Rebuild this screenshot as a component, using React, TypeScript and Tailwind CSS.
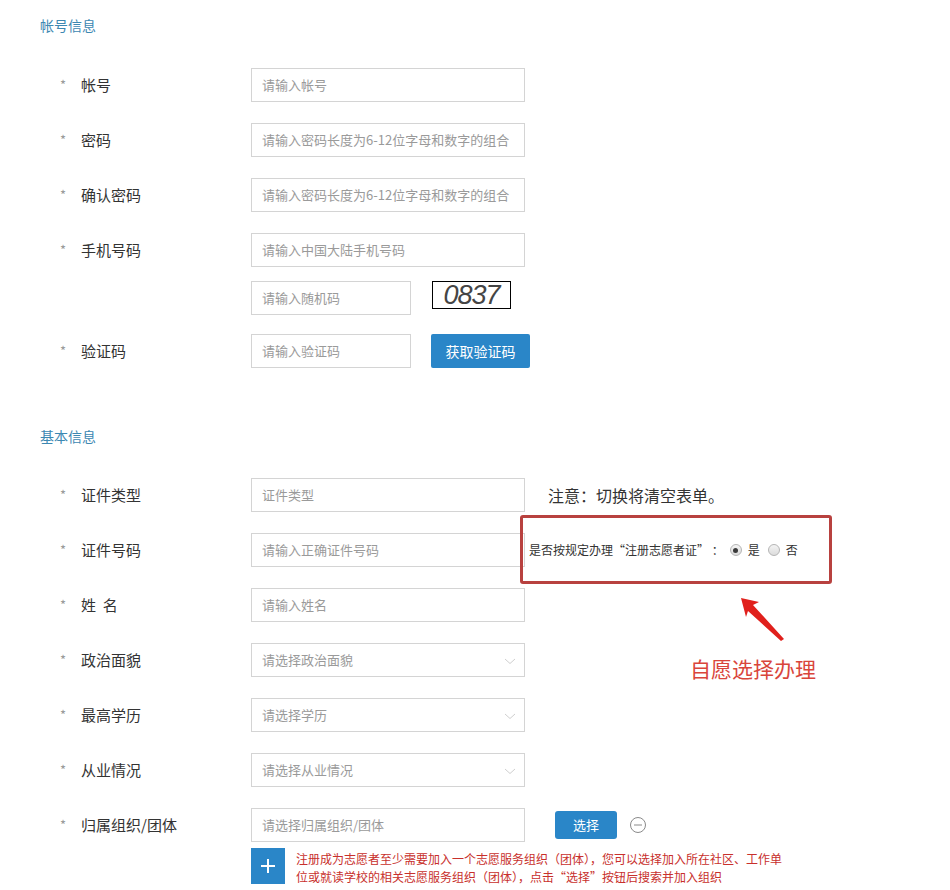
import type { ReactNode } from "react";

const font = "font-['Microsoft_YaHei','Noto_Sans_CJK_SC',sans-serif]";

function Chevron() {
    return (
        <svg width="12" height="7" viewBox="0 0 12 7" className="absolute right-[8px] top-[14px]">
            <path d="M1 1 L6 5.5 L11 1" fill="none" stroke="#cfcfcf" strokeWidth="1" />
        </svg>
    );
}

function Field({ placeholder, width = "w-[274px]", select = false }: { placeholder: string; width?: string; select?: boolean }) {
    return (
        <div className={`relative ${width} h-[34px] shrink-0 border border-[#d4d4d4] bg-white overflow-hidden`}>
            <div className="pl-[10px] pr-[6px] leading-[32px] text-[13px] text-[#9a9a9a] whitespace-nowrap overflow-hidden">
                {placeholder}
            </div>
            {select && <Chevron />}
        </div>
    );
}

interface RowProps {
    label?: string;
    children: ReactNode;
    className?: string;
}

function Row({ label, children, className = "" }: RowProps) {
    return (
        <div className={`flex items-center h-[34px] ${className}`}>
            <div className="w-[211px] shrink-0 flex items-center pl-[20px] text-[15px] text-[#333]">
                {label && (
                    <>
                        <span className="w-[21px] text-[#999] text-[13px]">*</span>
                        <span className="whitespace-pre">{label}</span>
                    </>
                )}
            </div>
            {children}
        </div>
    );
}

function SectionTitle({ children, className = "" }: { children: ReactNode; className?: string }) {
    return <div className={`text-[14px] leading-[16px] text-[#3d88b2] ${className}`}>{children}</div>;
}

function Radio({ checked }: { checked?: boolean }) {
    return (
        <span className="inline-flex items-center justify-center w-[12px] h-[12px] rounded-full border border-[#b5b5b5] bg-gradient-to-b from-[#f4f4f4] to-[#dcdcdc]">
            {checked && <span className="w-[5px] h-[5px] rounded-full bg-[#3a3a3a]" />}
        </span>
    );
}

export default function App() {
    return (
        <div className={`relative w-[950px] h-[890px] bg-white overflow-hidden ${font}`}>
            <div className="pl-[40px] pt-[17px]">
                <SectionTitle>帐号信息</SectionTitle>

                <Row label="帐号" className="mt-[35px]">
                    <Field placeholder="请输入帐号" />
                </Row>
                <Row label="密码" className="mt-[21px]">
                    <Field placeholder="请输入密码长度为6-12位字母和数字的组合" />
                </Row>
                <Row label="确认密码" className="mt-[21px]">
                    <Field placeholder="请输入密码长度为6-12位字母和数字的组合" />
                </Row>
                <Row label="手机号码" className="mt-[21px]">
                    <Field placeholder="请输入中国大陆手机号码" />
                </Row>
                <Row className="mt-[14px]">
                    <Field placeholder="请输入随机码" width="w-[160px]" />
                    <div className="ml-[21px] mb-[6px] w-[79px] h-[28px] border border-black flex items-center justify-center">
                        <span className="font-['Liberation_Sans',sans-serif] italic text-[27px] leading-none text-[#454545] tracking-[-1px]">
                            0837
                        </span>
                    </div>
                </Row>
                <Row label="验证码" className="mt-[19px]">
                    <Field placeholder="请输入验证码" width="w-[160px]" />
                    <button className="ml-[20px] w-[99px] h-[34px] rounded-[2px] bg-[#2a86c8] text-white text-[14px]">
                        获取验证码
                    </button>
                </Row>

                <SectionTitle className="mt-[60px]">基本信息</SectionTitle>

                <Row label="证件类型" className="mt-[34px]">
                    <Field placeholder="证件类型" />
                    <span className="ml-[23px] text-[16px] text-[#333] whitespace-nowrap">注意：切换将清空表单。</span>
                </Row>
                <Row label="证件号码" className="mt-[21px]">
                    <Field placeholder="请输入正确证件号码" />
                    <div className="relative -ml-[5px] w-[312px] h-[34px] flex items-center pl-[9px] text-[12px] text-[#333] whitespace-nowrap">
                        <div className="absolute left-0 right-0 -top-[18px] -bottom-[17px] border-[3px] border-[#b8413f] rounded-[3px]" />
                        <span>是否按规定办理“注册志愿者证”&nbsp;：</span>
                        <span className="ml-[6px] flex items-center gap-[6px]">
                            <Radio checked />
                            <span>是</span>
                        </span>
                        <span className="ml-[8px] flex items-center gap-[6px]">
                            <Radio />
                            <span>否</span>
                        </span>
                    </div>
                </Row>
                <Row label={"姓  名"} className="mt-[21px]">
                    <Field placeholder="请输入姓名" />
                </Row>
                <Row label="政治面貌" className="mt-[21px]">
                    <Field placeholder="请选择政治面貌" select />
                </Row>
                <Row label="最高学历" className="mt-[21px]">
                    <Field placeholder="请选择学历" select />
                </Row>
                <Row label="从业情况" className="mt-[21px]">
                    <Field placeholder="请选择从业情况" select />
                </Row>
                <Row label="归属组织/团体" className="mt-[21px]">
                    <Field placeholder="请选择归属组织/团体" />
                    <button className="ml-[30px] w-[62px] h-[28px] rounded-[3px] bg-[#2a86c8] text-white text-[13px]">
                        选择
                    </button>
                    <svg width="18" height="18" viewBox="0 0 18 18" className="ml-[12px]">
                        <circle cx="9" cy="9" r="7.5" fill="none" stroke="#8a8a8a" strokeWidth="1" />
                        <path d="M5 9 H13" stroke="#8a8a8a" strokeWidth="1" />
                    </svg>
                </Row>

                <div className="flex items-start mt-[6px] pl-[211px]">
                    <div className="w-[34px] h-[36px] shrink-0 bg-[#2a86c8] flex items-center justify-center">
                        <svg width="16" height="16" viewBox="0 0 16 16">
                            <path d="M8 1 V15 M1 8 H15" stroke="white" strokeWidth="2" />
                        </svg>
                    </div>
                    <p className="ml-[11px] w-[490px] text-[12px] leading-[18px] text-[#c8302c] pt-[2px]">
                        注册成为志愿者至少需要加入一个志愿服务组织（团体），您可以选择加入所在社区、工作单位或就读学校的相关志愿服务组织（团体），点击“选择”按钮后搜索并加入组织
                    </p>
                </div>
            </div>

            {/* annotation arrow */}
            <svg width="60" height="60" viewBox="0 0 60 60" className="absolute left-[735px] top-[592px]">
                <path d="M6 6 L24 10 L18 13 L49 47 L46 49 L13 19 L11 25 Z" fill="#e0201c" />
            </svg>
            <div className="absolute left-[690px] top-[654px] text-[21px] leading-[28px] text-[#d9453b]">
                自愿选择办理
            </div>
        </div>
    );
}
